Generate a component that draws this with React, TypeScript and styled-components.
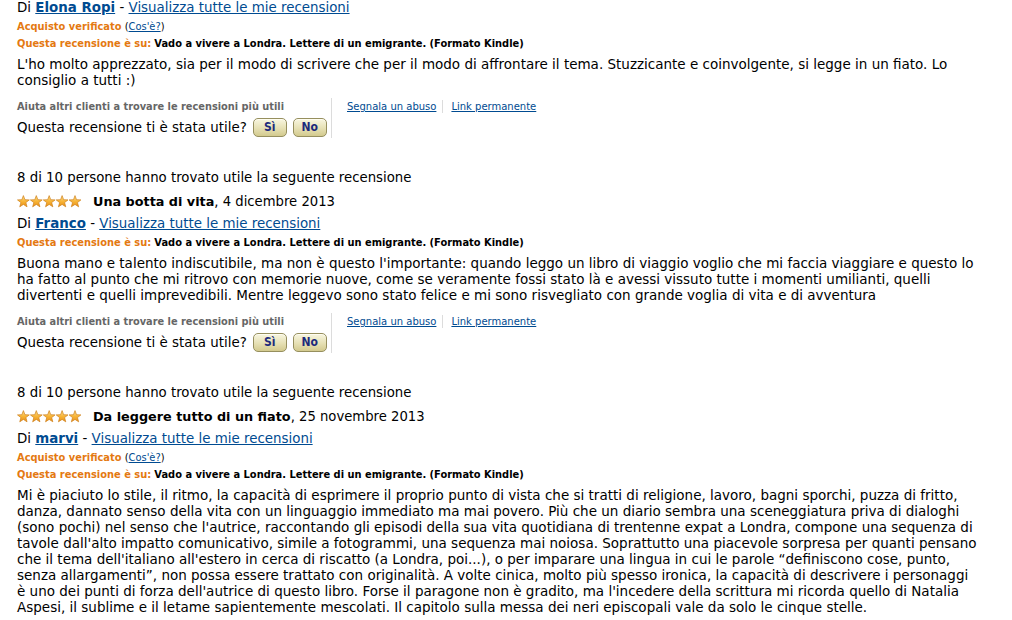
import { createGlobalStyle } from "styled-components";
import styled from "styled-components";

const GlobalStyle = createGlobalStyle`
  html, body {
    margin: 0;
    padding: 0;
    background: #fff;
  }
  body {
    font-family: "DejaVu Sans", Verdana, sans-serif;
    color: #000;
  }
`;

const Page = styled.div`
  display: flex;
  flex-direction: column;
  padding: 0 0 0 17px;
  width: 995px;
  height: 620px;
  overflow: hidden;
`;

const Review = styled.section`
  display: flex;
  flex-direction: column;
  flex-shrink: 0;
  & + & {
    margin-top: 32px;
  }
`;

const HelpfulCount = styled.div`
  font-size: 13.3px;
  line-height: 16px;
`;

const TitleRow = styled.div`
  display: flex;
  align-items: center;
  height: 18px;
  margin-top: 6px;
  font-size: 13.2px;
  white-space: pre;
`;

const Title = styled.b`
  font-size: 12.8px;
  margin-left: 11px;
`;

const Byline = styled.div<{ $first?: boolean }>`
  font-size: 13.4px;
  line-height: 16px;
  margin-top: ${(p) => (p.$first ? 0 : 6)}px;
  margin-bottom: 1px;
  white-space: nowrap;
`;

const Author = styled.a`
  font-weight: bold;
  color: #004b91;
  text-decoration: underline;
`;

const Link = styled.a<{ $small?: boolean }>`
  color: #004b91;
  text-decoration: underline;
  font-size: ${(p) => (p.$small ? "10px" : "inherit")};
`;

const SmallLine = styled.div`
  font-size: 9.9px;
  line-height: 14px;
  margin-top: 3px;
  white-space: nowrap;
`;

const Orange = styled.span`
  color: #e47911;
  font-weight: bold;
`;

const Product = styled.b`
  color: #000;
`;

const Body = styled.div`
  font-size: 13.5px;
  line-height: 16px;
  margin-top: 5px;
`;

const BodyLine = styled.span`
  display: block;
  white-space: nowrap;
`;

const Footer = styled.div`
  display: flex;
  margin-top: 10px;
`;

const FooterLeft = styled.div`
  display: flex;
  flex-direction: column;
  width: 314px;
  padding-top: 2px;
  padding-bottom: 1px;
  border-right: 1px solid #dcdcdc;
`;

const HelpPrompt = styled.div`
  font-size: 9.8px;
  line-height: 14px;
  font-weight: bold;
  color: #666;
`;

const VoteRow = styled.div`
  display: flex;
  align-items: center;
  gap: 6px;
  margin-top: 3px;
  height: 20px;
  font-size: 13.4px;
`;

const VoteButton = styled.button`
  width: 34px;
  height: 19px;
  padding: 0;
  border: 1px solid #968f5e;
  border-radius: 5px;
  background: linear-gradient(#f8f6e0, #e6e0b4 55%, #d3ca8e);
  box-shadow: inset 0 1px 0 #fffdf0;
  font-family: "DejaVu Sans Condensed", "DejaVu Sans", sans-serif;
  font-weight: bold;
  font-size: 12px;
  color: #1c2a7c;
  line-height: 16px;
`;

const FooterRight = styled.div`
  display: flex;
  align-items: flex-start;
  padding-left: 15px;
  padding-top: 2px;
  line-height: 14px;
`;

const Divider = styled.span`
  display: inline-block;
  width: 1px;
  height: 13px;
  background: #dcdcdc;
  margin: 0 8px 0 6px;
`;

const Stars = () => {
  const pts: string[] = [];
  for (let i = 0; i < 10; i++) {
    const r = i % 2 === 0 ? 6.2 : 2.6;
    const a = (Math.PI / 5) * i - Math.PI / 2;
    pts.push(`${(6.4 + r * Math.cos(a)).toFixed(2)},${(6.8 + r * Math.sin(a)).toFixed(2)}`);
  }
  return (
    <svg width="65" height="13" viewBox="0 0 65 13">
      <defs>
        <linearGradient id="starFill" x1="0" y1="0" x2="0" y2="1">
          <stop offset="0" stopColor="#fde08a" />
          <stop offset="0.55" stopColor="#f7b233" />
          <stop offset="1" stopColor="#e8901a" />
        </linearGradient>
      </defs>
      {[0, 1, 2, 3, 4].map((i) => (
        <polygon
          key={i}
          transform={`translate(${i * 12.9} 0)`}
          points={pts.join(" ")}
          fill="url(#starFill)"
          stroke="#cf7f1a"
          strokeWidth="0.7"
          strokeLinejoin="round"
        />
      ))}
    </svg>
  );
};

type ReviewData = {
  helpful?: string;
  title?: string;
  date?: string;
  author: string;
  verified: boolean;
  lines: string[];
};

const PRODUCT = "Vado a vivere a Londra. Lettere di un emigrante. (Formato Kindle)";

const reviews: ReviewData[] = [
  {
    author: "Elona Ropi",
    verified: true,
    lines: [
      "L'ho molto apprezzato, sia per il modo di scrivere che per il modo di affrontare il tema. Stuzzicante e coinvolgente, si legge in un fiato. Lo",
      "consiglio a tutti :)",
    ],
  },
  {
    helpful: "8 di 10 persone hanno trovato utile la seguente recensione",
    title: "Una botta di vita",
    date: "4 dicembre 2013",
    author: "Franco",
    verified: false,
    lines: [
      "Buona mano e talento indiscutibile, ma non è questo l'importante: quando leggo un libro di viaggio voglio che mi faccia viaggiare e questo lo",
      "ha fatto al punto che mi ritrovo con memorie nuove, come se veramente fossi stato là e avessi vissuto tutte i momenti umilianti, quelli",
      "divertenti e quelli imprevedibili. Mentre leggevo sono stato felice e mi sono risvegliato con grande voglia di vita e di avventura",
    ],
  },
  {
    helpful: "8 di 10 persone hanno trovato utile la seguente recensione",
    title: "Da leggere tutto di un fiato",
    date: "25 novembre 2013",
    author: "marvi",
    verified: true,
    lines: [
      "Mi è piaciuto lo stile, il ritmo, la capacità di esprimere il proprio punto di vista che si tratti di religione, lavoro, bagni sporchi, puzza di fritto,",
      "danza, dannato senso della vita con un linguaggio immediato ma mai povero. Più che un diario sembra una sceneggiatura priva di dialoghi",
      "(sono pochi) nel senso che l'autrice, raccontando gli episodi della sua vita quotidiana di trentenne expat a Londra, compone una sequenza di",
      "tavole dall'alto impatto comunicativo, simile a fotogrammi, una sequenza mai noiosa. Soprattutto una piacevole sorpresa per quanti pensano",
      "che il tema dell'italiano all'estero in cerca di riscatto (a Londra, poi...), o per imparare una lingua in cui le parole “definiscono cose, punto,",
      "senza allargamenti”, non possa essere trattato con originalità. A volte cinica, molto più spesso ironica, la capacità di descrivere i personaggi",
      "è uno dei punti di forza dell'autrice di questo libro. Forse il paragone non è gradito, ma l'incedere della scrittura mi ricorda quello di Natalia",
      "Aspesi, il sublime e il letame sapientemente mescolati. Il capitolo sulla messa dei neri episcopali vale da solo le cinque stelle.",
    ],
  },
];

function ReviewBlock({ data, last }: { data: ReviewData; last?: boolean }) {
  return (
    <Review>
      {data.helpful && <HelpfulCount>{data.helpful}</HelpfulCount>}
      {data.title && (
        <TitleRow>
          <Stars />
          <Title>{data.title}</Title>, {data.date}
        </TitleRow>
      )}
      <Byline $first={!data.helpful}>
        Di <Author href="#">{data.author}</Author> -{" "}
        <Link href="#">Visualizza tutte le mie recensioni</Link>
      </Byline>
      {data.verified && (
        <SmallLine>
          <Orange>Acquisto verificato</Orange> (<Link href="#">Cos'è?</Link>)
        </SmallLine>
      )}
      <SmallLine>
        <Orange>Questa recensione è su:</Orange> <Product>{PRODUCT}</Product>
      </SmallLine>
      <Body>
        {data.lines.map((l, i) => (
          <BodyLine key={i}>{l}</BodyLine>
        ))}
      </Body>
      {!last && (
        <Footer>
          <FooterLeft>
            <HelpPrompt>Aiuta altri clienti a trovare le recensioni più utili</HelpPrompt>
            <VoteRow>
              <span>Questa recensione ti è stata utile?</span>
              <VoteButton>Sì</VoteButton>
              <VoteButton>No</VoteButton>
            </VoteRow>
          </FooterLeft>
          <FooterRight>
            <Link $small href="#">Segnala un abuso</Link>
            <Divider />
            <Link $small href="#">Link permanente</Link>
          </FooterRight>
        </Footer>
      )}
    </Review>
  );
}

export default function App() {
  return (
    <>
      <GlobalStyle />
      <Page>
        {reviews.map((r, i) => (
          <ReviewBlock key={i} data={r} last={i === reviews.length - 1} />
        ))}
      </Page>
    </>
  );
}
